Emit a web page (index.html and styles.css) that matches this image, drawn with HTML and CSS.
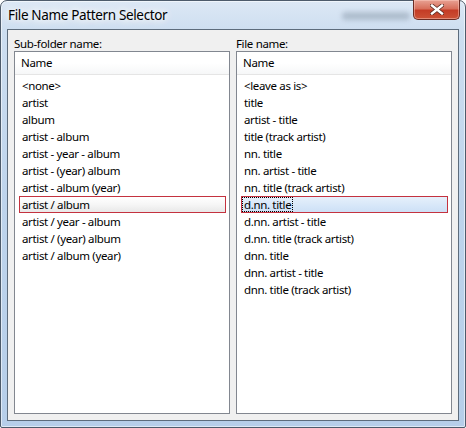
FILE: index.html
```html
<!DOCTYPE html>
<html lang="en">
<head>
    <meta charset="UTF-8">
    <title>File Name Pattern Selector</title>
    <link rel="stylesheet" href="styles.css">
</head>
<body>
    <div class="window">
        <div class="titlebar">
            <span class="title">File Name Pattern Selector</span>
            <span class="glass-smudge"></span>
            <div class="close-btn">
                <svg width="14" height="11" viewBox="0 0 14 11">
                    <path d="M2 1.5 L12 9.5 M12 1.5 L2 9.5" stroke="#5a2a22" stroke-width="4" stroke-linecap="square"/>
                    <path d="M2 1.5 L12 9.5 M12 1.5 L2 9.5" stroke="#fff" stroke-width="2.4" stroke-linecap="square"/>
                </svg>
            </div>
        </div>

        <div class="client">
            <div class="pane">
                <div class="caption">Sub-folder name:</div>
                <div class="listbox">
                    <div class="list-header">Name</div>
                    <ul class="rows">
                        <li>&lt;none&gt;</li>
                        <li>artist</li>
                        <li>album</li>
                        <li>artist - album</li>
                        <li>artist - year - album</li>
                        <li>artist - (year) album</li>
                        <li>artist - album (year)</li>
                        <li class="selected inactive">artist / album</li>
                        <li>artist / year - album</li>
                        <li>artist / (year) album</li>
                        <li>artist / album (year)</li>
                    </ul>
                </div>
            </div>

            <div class="pane">
                <div class="caption">File name:</div>
                <div class="listbox">
                    <div class="list-header">Name</div>
                    <ul class="rows">
                        <li>&lt;leave as is&gt;</li>
                        <li>title</li>
                        <li>artist - title</li>
                        <li>title (track artist)</li>
                        <li>nn. title</li>
                        <li>nn. artist - title</li>
                        <li>nn. title (track artist)</li>
                        <li class="selected active"><span class="focus">d.nn. title</span></li>
                        <li>d.nn. artist - title</li>
                        <li>d.nn. title (track artist)</li>
                        <li>dnn. title</li>
                        <li>dnn. artist - title</li>
                        <li>dnn. title (track artist)</li>
                    </ul>
                </div>
            </div>
        </div>
    </div>
</body>
</html>
```

FILE: styles.css
```css
html, body {
    margin: 0;
    padding: 0;
    background: #ffffff;
}
* {
    box-sizing: border-box;
}
.window {
    width: 466px;
    height: 428px;
    border: 1px solid #4d5b6b;
    border-radius: 7px 7px 2px 2px;
    padding: 0 6px 6px 6px;
    background: linear-gradient(to bottom, #dce8f5 0px, #cddef0 30px, #bed4ec 200px, #b6cee9 428px);
    box-shadow: inset 0 0 0 1px rgba(255, 255, 255, 0.55);
    display: flex;
    flex-direction: column;
    font-family: "Noto Sans", "Open Sans", sans-serif;
}
.titlebar {
    position: relative;
    height: 28px;
    flex: none;
}
.title {
    position: absolute;
    left: 1px;
    top: 5px;
    font-size: 13.5px;
    letter-spacing: -0.35px;
    line-height: 18px;
    color: #000;
    text-shadow: 0 0 6px #fff, 0 0 10px #fff, 0 0 14px #fff;
}
.glass-smudge {
    position: absolute;
    left: 335px;
    top: 11px;
    width: 68px;
    height: 8px;
    border-radius: 4px;
    background: rgba(60, 75, 95, 0.25);
    filter: blur(2.5px);
}
.close-btn {
    position: absolute;
    right: -1px;
    top: -1px;
    width: 47px;
    height: 20px;
    border: 1px solid #6b2c24;
    border-top: none;
    border-radius: 0 0 5px 5px;
    background: linear-gradient(to bottom, #e8a294 0%, #d8705c 45%, #c43c26 55%, #cc5236 100%);
    box-shadow: inset 0 0 0 1px rgba(255, 210, 200, 0.45);
    display: flex;
    align-items: center;
    justify-content: center;
}
.client {
    flex: 1;
    border: 1px solid #5d6c7c;
    background: #f0f0f0;
    padding: 0 6px 6px 6px;
    display: flex;
    gap: 6px;
}
.pane {
    flex: 1;
    display: flex;
    flex-direction: column;
    min-width: 0;
}
.caption {
    font-size: 11.5px;
    letter-spacing: -0.35px;
    line-height: 14px;
    padding-top: 7px;
    color: #000;
}
.listbox {
    flex: 1;
    border: 1px solid #828790;
    background: #fff;
}
.list-header {
    height: 23px;
    border-bottom: 1px solid #e5e5e5;
    background: linear-gradient(to bottom, #ffffff 0%, #ffffff 50%, #f6f7f8 100%);
    padding-left: 6px;
    font-size: 11.5px;
    letter-spacing: -0.35px;
    line-height: 22px;
    color: #000;
}
.rows {
    list-style: none;
    margin: 0;
    padding: 2px 0 0 0;
}
.rows li {
    height: 17px;
    margin: 0 3px 0 4px;
    padding-left: 2px;
    border: 1px solid transparent;
    font-size: 11.5px;
    letter-spacing: -0.35px;
    line-height: 15px;
    color: #000;
    white-space: nowrap;
}
.rows li.selected {
    border-color: #c4323f;
}
.rows li.inactive {
    background: linear-gradient(to bottom, #ffffff 0%, #f6f6f6 50%, #e8e8e8 100%);
}
.rows li.active {
    background: linear-gradient(to bottom, #e6f0fb 0%, #d9e8f9 50%, #cde0f6 100%);
    padding-left: 0;
}
.focus {
    display: inline-block;
    height: 15px;
    padding-left: 2px;
    padding-right: 2px;
    outline: 1px dotted #000;
    outline-offset: -1px;
}
```
